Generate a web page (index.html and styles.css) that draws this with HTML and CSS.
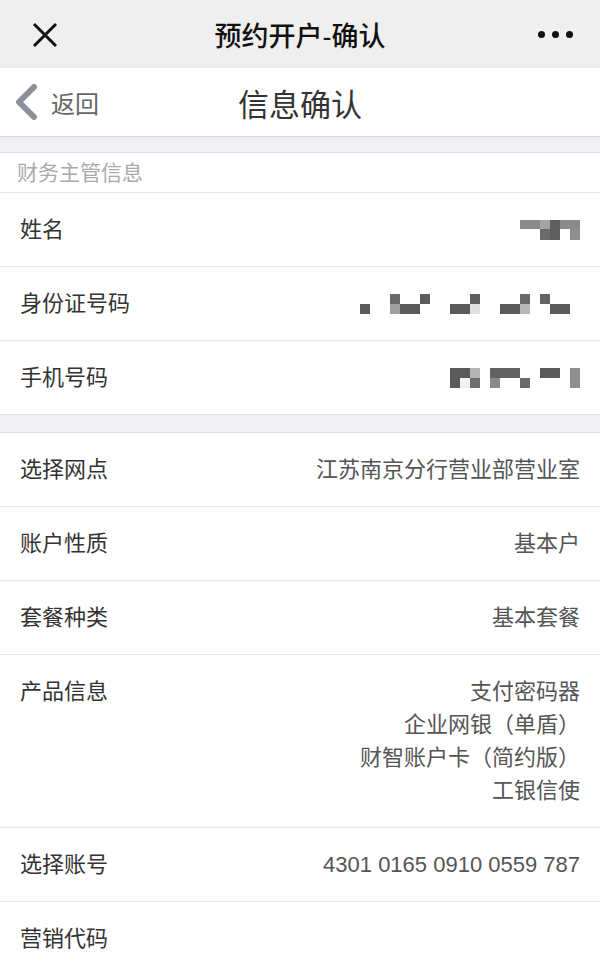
FILE: index.html
```html
<!DOCTYPE html>
<html lang="zh-CN">
<head>
  <meta charset="UTF-8" />
  <meta name="viewport" content="width=device-width, initial-scale=1.0" />
  <title>预约开户-确认</title>
  <link rel="stylesheet" href="styles.css">
</head>
<body>

  <div class="topbar">
    <div class="topbar-side">
      <svg class="icon-close" width="26" height="26" viewBox="0 0 26 26">
        <path d="M2 2 L24 24 M24 2 L2 24" stroke="#111" stroke-width="3" fill="none" />
      </svg>
    </div>
    <div class="topbar-title">预约开户-确认</div>
    <div class="topbar-side">
      <span class="dot"></span><span class="dot"></span><span class="dot"></span>
    </div>
  </div>

  <div class="navbar">
    <div class="navbar-side back">
      <svg class="icon-back" width="24" height="36" viewBox="0 0 24 36">
        <path d="M20 3 L5 18 L20 33" stroke="#8c9099" stroke-width="6" stroke-linecap="round" stroke-linejoin="round" fill="none" />
      </svg>
      <span>返回</span>
    </div>
    <div class="navbar-title">信息确认</div>
    <div class="navbar-side"></div>
  </div>

  <div class="group first">
    <div class="group-title">财务主管信息</div>
    <div class="row">
      <span class="label">姓名</span>
      <!-- mosaic blur -->
      <svg class="mosaic" width="60" height="20" viewBox="0 0 60 20">
        <rect x="0" y="0" width="60" height="9" fill="#8a8a8a" />
        <rect x="20" y="0" width="10" height="9" fill="#a3a3a3" />
        <rect x="30" y="0" width="10" height="20" fill="#5e5e5e" />
        <rect x="20" y="9" width="10" height="11" fill="#6a6a6a" />
        <rect x="50" y="9" width="10" height="11" fill="#8f8f8f" />
      </svg>
    </div>
    <div class="row">
      <span class="label">身份证号码</span>
      <svg class="mosaic" width="220" height="20" viewBox="0 0 220 20">
        <rect x="0" y="10" width="10" height="10" fill="#5a5a5a" />
        <rect x="30" y="0" width="10" height="10" fill="#6a6a6a" />
        <rect x="30" y="10" width="10" height="10" fill="#a0a0a0" />
        <rect x="40" y="10" width="20" height="10" fill="#5a5a5a" />
        <rect x="60" y="0" width="10" height="10" fill="#5c5c5c" />
        <rect x="90" y="10" width="20" height="10" fill="#5a5a5a" />
        <rect x="110" y="0" width="10" height="10" fill="#5e5e5e" />
        <rect x="110" y="10" width="10" height="10" fill="#e0e0e0" />
        <rect x="140" y="10" width="20" height="10" fill="#5a5a5a" />
        <rect x="160" y="0" width="10" height="10" fill="#6a6a6a" />
        <rect x="160" y="10" width="10" height="10" fill="#b8b8b8" />
        <rect x="180" y="0" width="10" height="10" fill="#646464" />
        <rect x="190" y="10" width="20" height="10" fill="#5a5a5a" />
      </svg>
    </div>
    <div class="row">
      <span class="label">手机号码</span>
      <svg class="mosaic" width="130" height="20" viewBox="0 0 130 20">
        <rect x="0" y="0" width="20" height="20" fill="#5a5a5a" />
        <rect x="10" y="10" width="10" height="10" fill="#f2f2f2" />
        <rect x="20" y="0" width="10" height="10" fill="#b5b5b5" />
        <rect x="20" y="10" width="10" height="10" fill="#6e6e6e" />
        <rect x="40" y="0" width="30" height="10" fill="#626262" />
        <rect x="40" y="10" width="10" height="10" fill="#8a8a8a" />
        <rect x="70" y="10" width="10" height="10" fill="#6a6a6a" />
        <rect x="90" y="0" width="20" height="10" fill="#5a5a5a" />
        <rect x="120" y="0" width="10" height="20" fill="#8e8e8e" />
      </svg>
    </div>
  </div>

  <div class="group">
    <div class="row">
      <span class="label">选择网点</span>
      <span class="value">江苏南京分行营业部营业室</span>
    </div>
    <div class="row">
      <span class="label">账户性质</span>
      <span class="value">基本户</span>
    </div>
    <div class="row">
      <span class="label">套餐种类</span>
      <span class="value">基本套餐</span>
    </div>
    <div class="row top">
      <span class="label">产品信息</span>
      <div class="value lines">
        <div>支付密码器</div>
        <div>企业网银（单盾）</div>
        <div>财智账户卡（简约版）</div>
        <div>工银信使</div>
      </div>
    </div>
    <div class="row">
      <span class="label">选择账号</span>
      <span class="value">4301 0165 0910 0559 787</span>
    </div>
    <div class="row">
      <span class="label">营销代码</span>
      <span class="value"></span>
    </div>
  </div>

</body>
</html>
```

FILE: styles.css
```css
body {
  margin: 0;
  background: #efeff4;
  color: #333;
  font-family: "Liberation Sans", "Noto Sans CJK SC", sans-serif;
}

/* top window bar */
.topbar {
  display: flex;
  align-items: center;
  height: 68px;
  background: #efefef;
}
.topbar-side {
  width: 90px;
  display: flex;
  align-items: center;
  justify-content: center;
  gap: 7px;
}
.icon-close {
  display: block;
  margin-top: 2px;
}
.topbar-title {
  flex: 1;
  text-align: center;
  font-size: 27px;
  font-weight: 500;
  color: #111;
}
.dot {
  width: 7px;
  height: 7px;
  border-radius: 50%;
  background: #111;
}

/* page nav */
.navbar {
  display: flex;
  align-items: center;
  height: 68px;
  background: #fff;
  border-bottom: 1px solid #d9d9dc;
}
.navbar-side {
  width: 130px;
}
.back {
  display: flex;
  align-items: center;
  gap: 13px;
  padding-left: 14px;
  box-sizing: border-box;
  font-size: 24px;
  color: #666;
}
.icon-back {
  display: block;
}
.navbar-title {
  flex: 1;
  text-align: center;
  font-size: 31px;
  color: #333;
}

/* list groups */
.group {
  background: #fff;
  margin-top: 17px;
  border-top: 1px solid #e0e0e3;
  border-bottom: 1px solid #e0e0e3;
}
.group.first {
  margin-top: 15px;
}
.group-title {
  height: 39px;
  line-height: 39px;
  padding-left: 17px;
  font-size: 21px;
  color: #aaa;
  border-bottom: 1px solid #e6e6e8;
}
.row {
  display: flex;
  justify-content: space-between;
  align-items: center;
  padding: 20px 20px;
  line-height: 33px;
  font-size: 22px;
  border-bottom: 1px solid #e6e6e8;
}
.row:last-child {
  border-bottom: none;
}
.row.top {
  align-items: flex-start;
}
.label {
  color: #333;
}
.value {
  color: #555;
  text-align: right;
}
.lines div {
  white-space: nowrap;
}
.mosaic {
  display: block;
}
```
